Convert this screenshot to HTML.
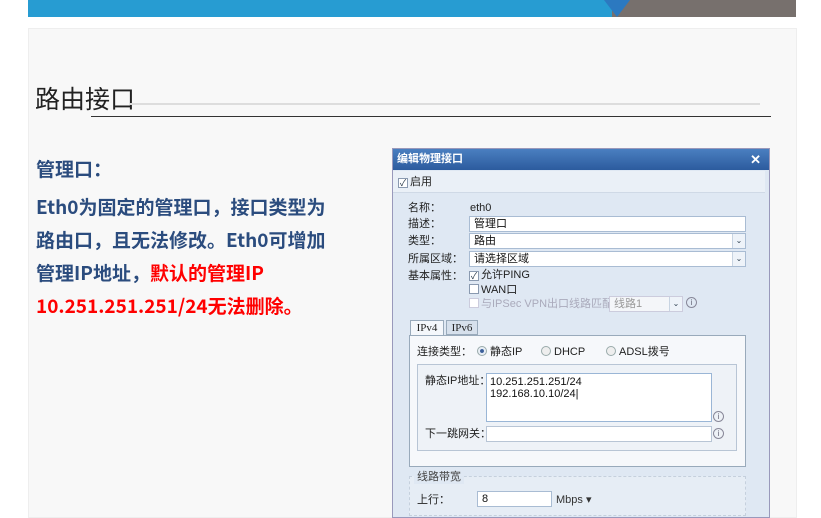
<!DOCTYPE html>
<html><head><meta charset="utf-8"><style>
*{margin:0;padding:0;box-sizing:border-box}
body{width:821px;height:510px;background:#fff;position:relative;overflow:hidden;font-family:"Liberation Sans","Noto Sans CJK SC",sans-serif}
.a{position:absolute}
.s{font-size:11px;line-height:14px;color:#222;font-family:"Liberation Sans","Noto Sans CJK SC",sans-serif}
.in{position:absolute;background:#fff;border:1px solid #a9bcd3;height:16px;font-size:11px;padding-left:4px;line-height:14px;color:#111}
.dd{position:absolute;right:0;top:0;width:13px;height:14px;border-left:1px solid #c8d4e2;background:#eef3f9;font-size:8px;text-align:center;color:#345;line-height:14px}
.cb{display:inline-block;width:10px;height:10px;border:1px solid #8a9ab0;background:#fff;font-size:9px;line-height:8px;text-align:center;vertical-align:-1px;margin-right:2px;color:#234}
.rd{display:inline-block;width:10px;height:10px;border-radius:50%;border:1px solid #9aa;background:#eee;vertical-align:-1px;margin-right:3px}
.info{position:absolute;width:11px;height:11px;border:1px solid #889;border-radius:50%;font-size:8px;line-height:9px;text-align:center;color:#667}
</style></head><body>
<div class="a" style="left:28px;top:0;width:584px;height:17px;background:#279cd2"></div>
<div class="a" style="left:612px;top:0;width:184px;height:17px;background:#77706d"></div>
<div class="a" style="left:604px;top:0;width:0;height:0;border-left:13px solid transparent;border-right:13px solid transparent;border-top:17px solid #2c79c0"></div>
<div class="a" style="left:28px;top:28px;width:769px;height:490px;background:#f8f8f8;border:1px solid #eee"></div>
<div class="a" style="left:35px;top:82px;font-size:25px;color:#222;font-family:'Noto Sans CJK SC',sans-serif;line-height:32px">路由接口</div>
<div class="a" style="left:130px;top:103px;width:630px;height:2px;background:#ddd"></div>
<div class="a" style="left:91px;top:116px;width:680px;height:1px;background:#333"></div>
<div class="a" style="left:36px;top:152px;font-size:19px;font-weight:bold;color:#2b4c7e;line-height:33px;font-family:'Noto Sans CJK SC',sans-serif;width:340px">管理口：<br><span style="display:block;margin-top:5px">Eth0为固定的管理口，接口类型为<br>路由口，且无法修改。Eth0可增加<br>管理IP地址，<span style="color:#f00">默认的管理IP<br>10.251.251.251/24无法删除。</span></span></div>

<div class="a" style="left:392px;top:148px;width:378px;height:370px;background:#dfe8f3;border:1px solid #99b"></div>
<div class="a" style="left:393px;top:149px;width:376px;height:21px;background:linear-gradient(#4a7fc0,#2c5b9e);color:#fff;font-size:11px;font-weight:bold;line-height:21px;padding-left:4px">编辑物理接口<span style="position:absolute;right:8px;font-size:13px">✕</span></div>
<div class="a s" style="left:393px;top:171px;width:372px;height:22px;background:#eaf0f7;line-height:22px;padding-left:5px;border-bottom:1px solid #cfd9e6"><span class="cb">✓</span>启用</div>
<div class="a s" style="left:408px;top:201px">名称：</div><div class="a s" style="left:470px;top:201px">eth0</div>
<div class="a s" style="left:408px;top:217px">描述：</div><div class="in" style="left:469px;top:216px;width:277px">管理口</div>
<div class="a s" style="left:408px;top:234px">类型：</div><div class="in" style="left:469px;top:233px;width:277px">路由<div class="dd">⌄</div></div>
<div class="a s" style="left:408px;top:252px">所属区域：</div><div class="in" style="left:469px;top:251px;width:277px">请选择区域<div class="dd">⌄</div></div>
<div class="a s" style="left:408px;top:269px">基本属性：</div>
<div class="a s" style="left:469px;top:268px"><span class="cb">✓</span>允许PING</div>
<div class="a s" style="left:469px;top:283px"><span class="cb"></span>WAN口</div>
<div class="a s" style="left:469px;top:297px;color:#aab"><span class="cb" style="border-color:#ccd"></span>与IPSec VPN出口线路匹配：</div>
<div class="in" style="left:609px;top:296px;width:74px;color:#999;border-color:#ccd;background:#f4f6f9">线路1<div class="dd">⌄</div></div>
<div class="info" style="left:686px;top:297px">i</div>
<div class="a s" style="left:410px;top:320px;width:34px;height:16px;background:#f4f7fb;border:1px solid #9ab;border-bottom:none;text-align:center;line-height:15px;font-family:'Liberation Serif',serif">IPv4</div>
<div class="a s" style="left:446px;top:320px;width:32px;height:15px;background:#d6e0ec;border:1px solid #9ab;text-align:center;line-height:14px;font-family:'Liberation Serif',serif">IPv6</div>
<div class="a" style="left:409px;top:335px;width:337px;height:132px;background:#f6f8fb;border:1px solid #9ab"></div>
<div class="a s" style="left:417px;top:345px">连接类型：</div>
<div class="a s" style="left:477px;top:345px"><span class="rd" style="background:radial-gradient(#3a5f9a 30%,#e8eef5 40%)"></span>静态IP</div>
<div class="a s" style="left:541px;top:345px"><span class="rd"></span>DHCP</div>
<div class="a s" style="left:606px;top:345px"><span class="rd"></span>ADSL拨号</div>
<div class="a" style="left:417px;top:364px;width:320px;height:87px;background:#eef2f7;border:1px solid #b8c5d5"></div>
<div class="a s" style="left:425px;top:374px">静态IP地址：</div>
<div class="a" style="left:486px;top:373px;width:226px;height:49px;background:#fff;border:1px solid #9ab6d6;font-size:11px;line-height:12px;padding:2px 3px;color:#111">10.251.251.251/24<br>192.168.10.10/24|</div>
<div class="info" style="left:713px;top:411px">i</div>
<div class="a s" style="left:425px;top:427px">下一跳网关：</div>
<div class="a" style="left:486px;top:426px;width:226px;height:16px;background:#fff;border:1px solid #b8c5d5"></div>
<div class="info" style="left:713px;top:428px">i</div>
<div class="a" style="left:409px;top:476px;width:337px;height:40px;border:1px dashed #c5d0dd;background:#e6edf5"></div>
<div class="a s" style="left:414px;top:470px;background:#dfe8f3;padding:0 3px;color:#444">线路带宽</div>
<div class="a s" style="left:417px;top:493px">上行：</div>
<div class="in" style="left:477px;top:491px;width:75px">8</div>
<div class="a s" style="left:556px;top:493px;color:#333">Mbps ▾</div>
</body></html>
